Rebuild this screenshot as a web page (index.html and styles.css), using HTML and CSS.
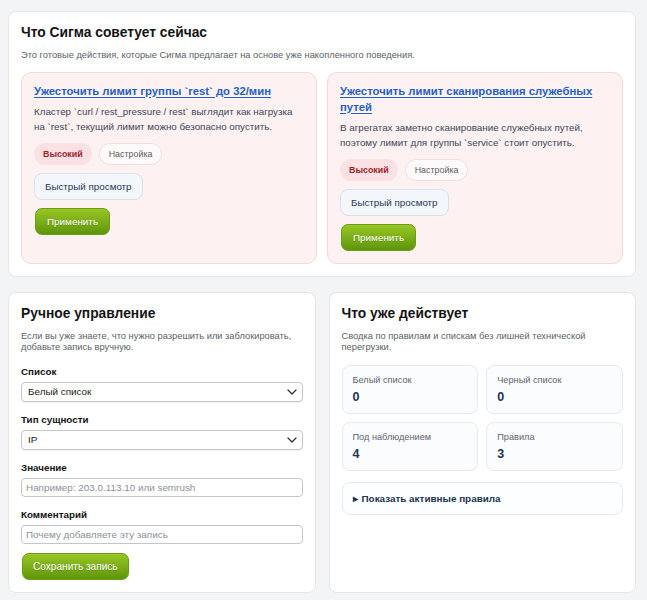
FILE: index.html
```html
<!DOCTYPE html>
<html lang="ru">
<head>
<meta charset="utf-8">
<title>Сигма</title>
<link rel="stylesheet" href="styles.css">
</head>
<body>
<div class="page">
  <section class="card top">
    <h2 class="card-title">Что Сигма советует сейчас</h2>
    <p class="card-desc">Это готовые действия, которые Сигма предлагает на основе уже накопленного поведения.</p>
    <div class="recs">
      <div class="rec">
        <a class="rec-title" href="#">Ужесточить лимит группы `rest` до 32/мин</a>
        <p class="rec-text">Кластер `curl / rest_pressure / rest` выглядит как нагрузка на `rest`, текущий лимит можно безопасно опустить.</p>
        <div class="tags">
          <span class="tag tag-high">Высокий</span>
          <span class="tag tag-plain">Настройка</span>
        </div>
        <div class="row"><button class="btn-light">Быстрый просмотр</button></div>
        <div class="row"><button class="btn-green">Применить</button></div>
      </div>
      <div class="rec">
        <a class="rec-title" href="#">Ужесточить лимит сканирования служебных путей</a>
        <p class="rec-text">В агрегатах заметно сканирование служебных путей, поэтому лимит для группы `service` стоит опустить.</p>
        <div class="tags">
          <span class="tag tag-high">Высокий</span>
          <span class="tag tag-plain">Настройка</span>
        </div>
        <div class="row"><button class="btn-light">Быстрый просмотр</button></div>
        <div class="row"><button class="btn-green">Применить</button></div>
      </div>
    </div>
  </section>

  <div class="bottom">
    <section class="card">
      <h2 class="card-title">Ручное управление</h2>
      <p class="card-desc">Если вы уже знаете, что нужно разрешить или заблокировать, добавьте запись вручную.</p>
      <label class="field-label">Список</label>
      <div class="select-wrap">
        <select class="select"><option>Белый список</option><option>Черный список</option></select>
        <svg class="chev" width="10" height="6" viewBox="0 0 10 6"><path d="M1 1l4 4 4-4" fill="none" stroke="#333" stroke-width="1.3" stroke-linecap="round" stroke-linejoin="round"/></svg>
      </div>
      <label class="field-label">Тип сущности</label>
      <div class="select-wrap">
        <select class="select"><option>IP</option></select>
        <svg class="chev" width="10" height="6" viewBox="0 0 10 6"><path d="M1 1l4 4 4-4" fill="none" stroke="#333" stroke-width="1.3" stroke-linecap="round" stroke-linejoin="round"/></svg>
      </div>
      <label class="field-label">Значение</label>
      <input class="input" type="text" placeholder="Например: 203.0.113.10 или semrush">
      <label class="field-label">Комментарий</label>
      <input class="input" type="text" placeholder="Почему добавляете эту запись">
      <div class="row"><button class="btn-green btn-save">Сохранить запись</button></div>
    </section>

    <section class="card">
      <h2 class="card-title">Что уже действует</h2>
      <p class="card-desc">Сводка по правилам и спискам без лишней технической перегрузки.</p>
      <div class="stats">
        <div class="stat"><div class="stat-label">Белый список</div><div class="stat-value">0</div></div>
        <div class="stat"><div class="stat-label">Черный список</div><div class="stat-value">0</div></div>
        <div class="stat"><div class="stat-label">Под наблюдением</div><div class="stat-value">4</div></div>
        <div class="stat"><div class="stat-label">Правила</div><div class="stat-value">3</div></div>
      </div>
      <details class="rules">
        <summary>Показать активные правила</summary>
      </details>
    </section>
  </div>
</div>
</body>
</html>
```

FILE: styles.css
```css
* { box-sizing: border-box; }
html, body { margin: 0; padding: 0; }
body {
  background: #f3f4f6;
  font-family: "Liberation Sans", Arial, Helvetica, sans-serif;
  color: #1a1a1a;
}
.page {
  width: 647px;
  padding: 11px 11px 8px 8px;
}
.card {
  background: #ffffff;
  border: 1px solid #e4e6ea;
  border-radius: 8px;
  padding: 11px 12px 12px 12px;
}
.card-title {
  margin: 0;
  font-size: 13.8px;
  line-height: 20px;
  font-weight: 700;
  color: #141414;
}
.card-desc {
  margin: 7px 0 0 0;
  font-size: 9.3px;
  line-height: 11.5px;
  color: #5a5f66;
}
.top .card-desc { margin-bottom: 10px; }

.recs {
  display: grid;
  grid-template-columns: 1fr 1fr;
  gap: 10px;
}
.rec {
  background: #fdf1f1;
  border: 1px solid #f3d7da;
  border-radius: 10px;
  padding: 10px 12px 12px 12px;
}
.rec-title {
  display: block;
  font-size: 11.3px;
  line-height: 16px;
  font-weight: 700;
  color: #1d62c4;
  text-decoration: underline;
  text-underline-offset: 2px;
}
.rec-text {
  margin: 5px 0 0 0;
  font-size: 9.8px;
  line-height: 15px;
  color: #3c4656;
}
.tags {
  display: flex;
  gap: 7px;
  margin-top: 9px;
}
.tag {
  display: inline-flex;
  align-items: center;
  height: 22px;
  padding: 0 9px;
  border-radius: 11px;
  font-size: 8.9px;
}
.tag-high {
  background: #fbe1e4;
  color: #a11f2c;
  font-weight: 700;
}
.tag-plain {
  background: #fffafa;
  border: 1px solid #efdfe1;
  color: #5b5f66;
}
.row { display: flex; margin-top: 8px; }
.btn-light {
  height: 27px;
  padding: 0 10px;
  border: 1px solid #d9e0e9;
  border-radius: 8px;
  background: #f3f6fa;
  color: #1f3a5a;
  font-family: inherit;
  font-size: 9.8px;
}
.btn-green {
  height: 27px;
  padding: 0 11px;
  margin-left: 1px;
  border: 1px solid #6a9e12;
  border-radius: 7px;
  background: linear-gradient(#98c625, #5e960b);
  color: #ffffff;
  font-family: inherit;
  font-size: 9.9px;
  text-shadow: 0 1px 0 rgba(0,0,0,0.15);
}

.bottom {
  display: grid;
  grid-template-columns: 1fr 1fr;
  gap: 13px;
  margin-top: 15px;
}

.field-label {
  display: block;
  margin-top: 11px;
  font-size: 9.8px;
  line-height: 13px;
  font-weight: 700;
  color: #141414;
}
.select-wrap {
  position: relative;
  margin-top: 4px;
}
.select {
  display: block;
  width: 100%;
  height: 20px;
  appearance: none;
  -webkit-appearance: none;
  border: 1px solid #c3c6cb;
  border-radius: 4px;
  background: #ffffff;
  padding: 0 6px;
  font-family: inherit;
  font-size: 9.9px;
  color: #1a1a1a;
  box-shadow: 0 1px 1px rgba(0,0,0,0.06);
}
.chev {
  position: absolute;
  right: 6px;
  top: 7px;
}
.input {
  display: block;
  width: 100%;
  height: 19px;
  margin-top: 4px;
  border: 1px solid #c3c6cb;
  border-radius: 4px;
  padding: 0 4px;
  font-family: inherit;
  font-size: 9.9px;
  color: #1a1a1a;
}
.input::placeholder { color: #8b9097; }
.btn-save { margin-top: 1px; padding: 0 10px; font-size: 10.1px; }

.stats {
  display: grid;
  grid-template-columns: 1fr 1fr;
  gap: 8px;
  margin-top: 11px;
}
.stat {
  background: #fbfcfe;
  border: 1px solid #e5eaf0;
  border-radius: 8px;
  padding: 8px 10px 8px 10px;
  height: 49px;
}
.stat-label {
  font-size: 9.2px;
  line-height: 12px;
  color: #5d6670;
}
.stat-value {
  margin-top: 3px;
  font-size: 12.5px;
  line-height: 16px;
  font-weight: 700;
  color: #1b3553;
}
.rules {
  margin-top: 11px;
  background: #fdfeff;
  border: 1px solid #e5eaf0;
  border-radius: 8px;
}
.rules summary {
  height: 31px;
  display: flex;
  align-items: center;
  padding-left: 10px;
  font-size: 9.9px;
  font-weight: 700;
  color: #1b3553;
  list-style: none;
  cursor: pointer;
}
.rules summary::-webkit-details-marker { display: none; }
.rules summary::before {
  content: "\25B8";
  font-size: 10px;
  margin-right: 4px;
}
```
